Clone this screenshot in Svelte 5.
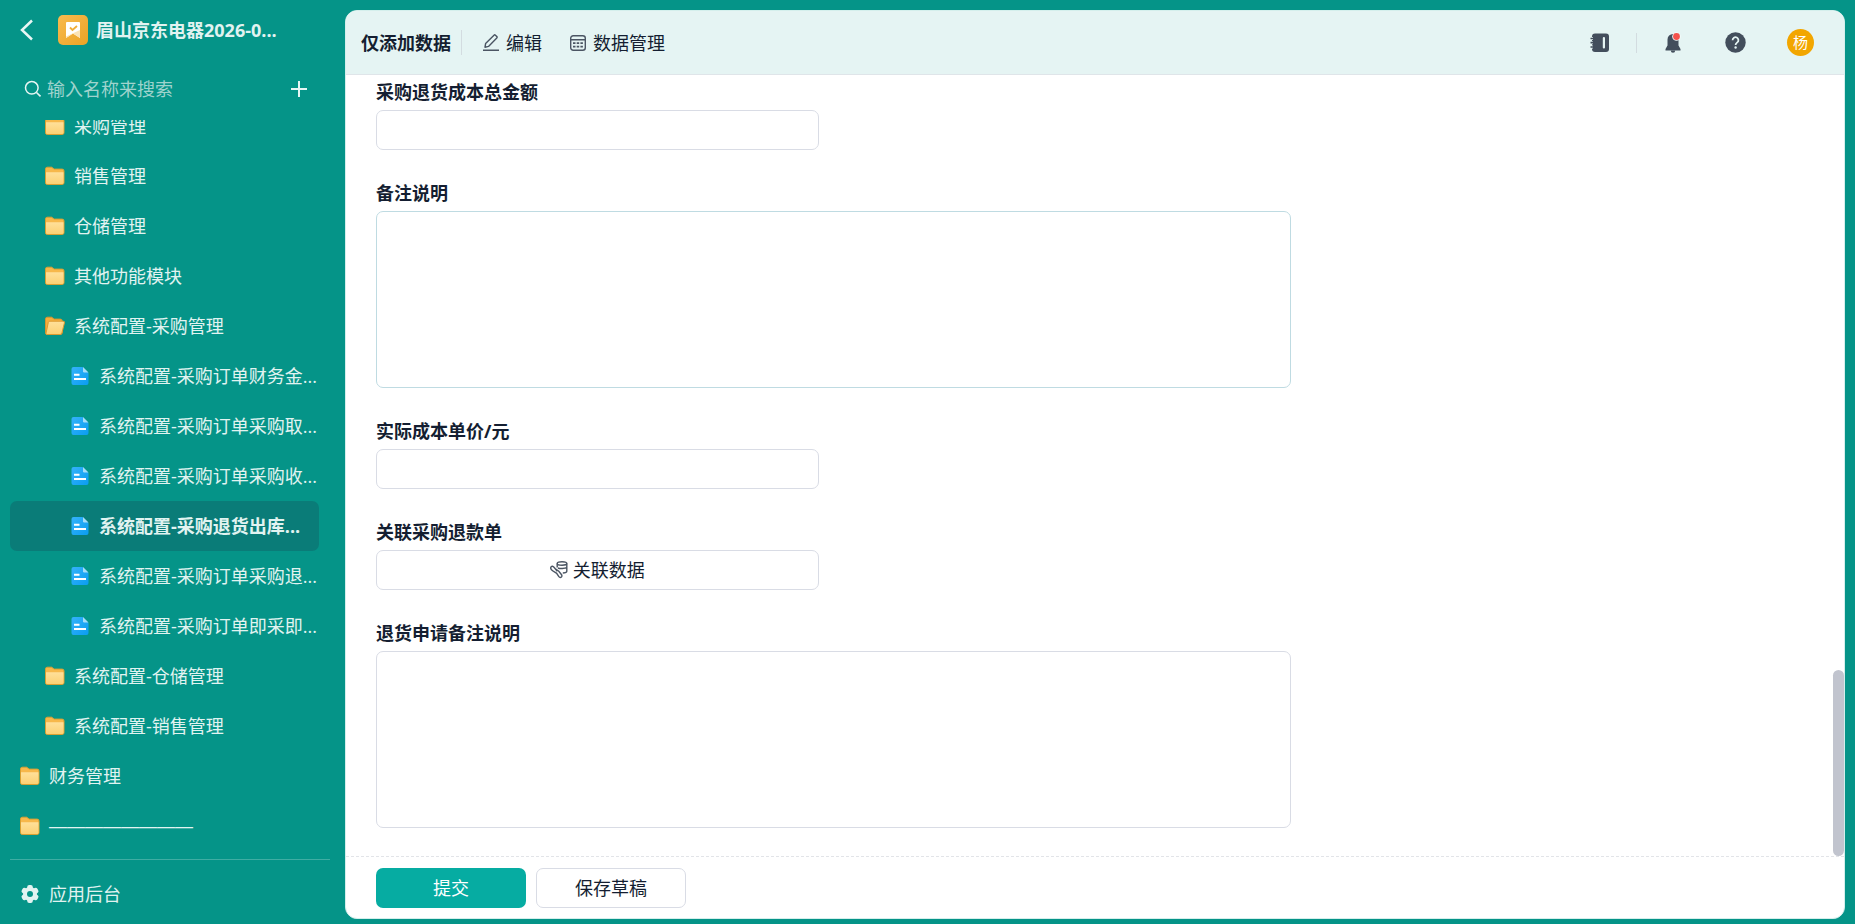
<script lang="ts">
	interface TreeNode {
		label: string;
		level: number;
		icon: 'folder' | 'open' | 'form';
		active?: boolean;
		separator?: boolean;
	}

	interface Field {
		id: string;
		label: string;
		type: 'text' | 'area' | 'link';
		hover?: boolean;
	}

	const nodes: TreeNode[] = [
		{ label: '采购管理', level: 1, icon: 'folder' },
		{ label: '销售管理', level: 1, icon: 'folder' },
		{ label: '仓储管理', level: 1, icon: 'folder' },
		{ label: '其他功能模块', level: 1, icon: 'folder' },
		{ label: '系统配置-采购管理', level: 1, icon: 'open' },
		{ label: '系统配置-采购订单财务金...', level: 2, icon: 'form' },
		{ label: '系统配置-采购订单采购取...', level: 2, icon: 'form' },
		{ label: '系统配置-采购订单采购收...', level: 2, icon: 'form' },
		{ label: '系统配置-采购退货出库...', level: 2, icon: 'form', active: true },
		{ label: '系统配置-采购订单采购退...', level: 2, icon: 'form' },
		{ label: '系统配置-采购订单即采即...', level: 2, icon: 'form' },
		{ label: '系统配置-仓储管理', level: 1, icon: 'folder' },
		{ label: '系统配置-销售管理', level: 1, icon: 'folder' },
		{ label: '财务管理', level: 0, icon: 'folder' },
		{ label: '————————', level: 0, icon: 'folder', separator: true }
	];

	const fields: Field[] = [
		{ id: 'cost-total', label: '采购退货成本总金额', type: 'text' },
		{ id: 'remark', label: '备注说明', type: 'area', hover: true },
		{ id: 'unit-price', label: '实际成本单价/元', type: 'text' },
		{ id: 'refund', label: '关联采购退款单', type: 'link' },
		{ id: 'apply-remark', label: '退货申请备注说明', type: 'area' }
	];

	let search = $state('');
	let values: Record<string, string> = $state({});
</script>

{#snippet folderIcon()}
	<svg width="20" height="20" viewBox="0 0 20 20">
		<path d="M0.5 3a1.8 1.8 0 0 1 1.8-1.8h4.4l2.4 1.9h8.1a1.8 1.8 0 0 1 1.8 1.8v11.8a1.8 1.8 0 0 1-1.8 1.8H2.3a1.8 1.8 0 0 1-1.8-1.8z" fill="#f7b84b" stroke="#d9a033" />
		<path d="M1 6.2h17.500v10.3a1.500 1.500 0 0 1-1.500 1.500H2.500A1.500 1.500 0 0 1 1 16.500z" fill="url(#folder-front)" />
	</svg>
{/snippet}

{#snippet openFolderIcon()}
	<svg width="20" height="20" viewBox="0 0 20 20">
		<path d="M0.5 3a1.8 1.8 0 0 1 1.8-1.8h4.4l2.4 1.9h6.300a1.8 1.8 0 0 1 1.8 1.8v11.8a1.8 1.8 0 0 1-1.8 1.8H2.3a1.8 1.8 0 0 1-1.8-1.8z" fill="#f5ae3d" stroke="#d9942c" />
		<path d="M4.800 5.200h13.200a1.400 1.400 0 0 1 1.400 1.800l-2.500 10a2 2 0 0 1-2 1.500H2a1 1 0 0 1-1-1.200L3.300 6.400a1.600 1.600 0 0 1 1.500-1.200z" fill="url(#folder-front)" stroke="#dc9a30" />
	</svg>
{/snippet}

{#snippet formIcon()}
	<svg width="20" height="20" viewBox="0 0 20 20">
		<path d="M3.500 1h9l6 6v10a2 2 0 0 1-2 2h-13a2 2 0 0 1-2-2V3a2 2 0 0 1 2-2z" fill="url(#form-page)" />
		<path d="M13 1l5.500 5.500h-4.300A1.200 1.200 0 0 1 13 5.300z" fill="#a5dcf8" />
		<path d="M4 8.700h5.500M4 13h12" stroke="#fff" stroke-width="2" />
	</svg>
{/snippet}

<div class="app">
	<svg class="defs" width="0" height="0" aria-hidden="true">
		<defs>
			<linearGradient id="folder-front" x1="0" y1="0" x2="0" y2="1">
				<stop offset="0" stop-color="#ffe09a" />
				<stop offset="1" stop-color="#fcd174" />
			</linearGradient>
			<linearGradient id="form-page" x1="0" y1="0" x2="1" y2="1">
				<stop offset="0" stop-color="#35b2fb" />
				<stop offset="1" stop-color="#0a9df0" />
			</linearGradient>
			<linearGradient id="app-logo" x1="0" y1="0" x2="1" y2="1">
				<stop offset="0" stop-color="#f8bb50" />
				<stop offset="1" stop-color="#eba324" />
			</linearGradient>
		</defs>
	</svg>

	<aside class="sidebar">
		<header class="app-header">
			<button class="icon-button" aria-label="返回">
				<svg width="14" height="22" viewBox="0 0 14 22">
					<path d="M12 1.500L2 11l10 9.500" fill="none" stroke="#e8f6f4" stroke-width="2.500" />
				</svg>
			</button>
			<svg width="30" height="30" viewBox="0 0 30 30">
				<rect width="30" height="30" rx="5" fill="url(#app-logo)" />
				<path d="M8 8a1 1 0 0 1 1-1h12a1 1 0 0 1 1 1v15l-7-4.500L8 23z" fill="#fff" />
				<path d="M22 15v8l-7-4.500L8 23v-1.500z" fill="#fbe3b5" />
				<path d="M12 12.500l2.500 2.500 4.500-4" fill="none" stroke="#f0ad38" stroke-width="1.800" />
			</svg>
			<h1>眉山京东电器2026-0...</h1>
		</header>

		<div class="search">
			<svg width="18" height="18" viewBox="0 0 18 18">
				<circle cx="7.800" cy="7.800" r="6.300" fill="none" stroke="#e8f6f4" stroke-width="1.500" />
				<path d="M12.500 12.500l4 3.800" stroke="#e8f6f4" stroke-width="1.700" />
			</svg>
			<input type="text" aria-label="搜索" placeholder="输入名称来搜索" bind:value={search} />
			<button class="icon-button" aria-label="新建">
				<svg width="16" height="16" viewBox="0 0 16 16">
					<path d="M8 0v16M0 8h16" stroke="#e8f6f4" stroke-width="2" />
				</svg>
			</button>
		</div>

		<nav class="tree">
			{#each nodes as node}
				<a href="#top" class="node level-{node.level}" class:active={node.active} class:separator={node.separator}>
					{#if node.icon === 'folder'}
						{@render folderIcon()}
					{:else if node.icon === 'open'}
						{@render openFolderIcon()}
					{:else}
						{@render formIcon()}
					{/if}
					<span>{node.label}</span>
				</a>
			{/each}
		</nav>

		<div class="backend">
			<a href="#backend" class="node">
				<svg width="20" height="20" viewBox="0 0 20 20">
					<g fill="#e1f3f1">
						<circle cx="10" cy="10" r="7" />
						<rect x="7.200" y="1" width="5.600" height="18" rx="2" />
						<rect x="7.200" y="1" width="5.600" height="18" rx="2" transform="rotate(60 10 10)" />
						<rect x="7.200" y="1" width="5.600" height="18" rx="2" transform="rotate(120 10 10)" />
					</g>
					<circle cx="10" cy="10" r="3" fill="#059488" />
				</svg>
				<span>应用后台</span>
			</a>
		</div>
	</aside>

	<main class="panel">
		<header class="toolbar">
			<h2>仅添加数据</h2>
			<span class="divider"></span>
			<button class="action">
				<svg width="16" height="18" viewBox="0 0 16 18" fill="none" stroke="#4b5563" stroke-width="1.400">
					<path d="M2 13.200l.6-3.600L11 1.200a1 1 0 0 1 1.400 0l1.400 1.400a1 1 0 0 1 0 1.400l-8.300 8.400z" stroke-linejoin="round" />
					<path d="M0 16.300h16" />
				</svg>
				编辑
			</button>
			<button class="action">
				<svg width="16" height="18" viewBox="0 0 16 18" fill="none" stroke="#4b5563" stroke-width="1.400">
					<rect x="0.700" y="1.700" width="14.600" height="14.600" rx="2.500" />
					<path d="M1 5.700h14" />
					<path d="M3 9.200h10M3 12.700h10" stroke-width="1.800" stroke-dasharray="2.500 1.200" />
				</svg>
				数据管理
			</button>

			<div class="tools">
				<button class="icon-button" aria-label="通讯录">
					<svg width="20" height="20" viewBox="0 0 20 20">
						<rect x="2" y="0.500" width="17" height="18.500" rx="3" fill="#434e5c" />
						<path d="M0 5.500h3M0 9.700h3M0 14h3" stroke="#e5f4f3" stroke-width="3" />
						<path d="M0.500 5.500h4M0.500 9.700h4M0.500 14h4" stroke="#434e5c" stroke-width="1.700" />
						<rect x="12.800" y="4" width="2.200" height="11.500" rx="1" fill="#e5f4f3" />
					</svg>
				</button>
				<span class="divider"></span>
				<button class="icon-button" aria-label="通知">
					<svg width="20" height="22" viewBox="0 0 20 22">
						<path d="M10 2a5.500 5.500 0 0 1 5.500 5.500v6L17.500 17v1.500h-15V17l2-3.500v-6A5.500 5.500 0 0 1 10 2z" fill="#434e5c" />
						<path d="M7.800 18.500h4.400a2.200 2.200 0 0 1-4.400 0z" fill="#434e5c" />
						<circle cx="13.500" cy="4.500" r="4.300" fill="#f4fbfa" />
						<circle cx="13.500" cy="4.500" r="3.400" fill="#f5524c" />
					</svg>
				</button>
				<button class="icon-button help" aria-label="帮助">
					<svg width="21" height="21" viewBox="0 0 21 21">
						<circle cx="10.500" cy="10.500" r="10.200" fill="#434e5c" />
						<path d="M7.600 8.200a2.900 2.900 0 1 1 4.700 2.200c-1 .8-1.700 1.200-1.700 2.500" fill="none" stroke="#e5f4f3" stroke-width="1.800" />
						<circle cx="10.600" cy="15.500" r="1.200" fill="#e5f4f3" />
					</svg>
				</button>
				<button class="avatar">杨</button>
			</div>
		</header>

		<div class="body">
			<form class="form" id="entry">
				{#each fields as field}
					<div class="field" class:wide={field.type === 'area'}>
						<label for={field.id}>{field.label}</label>
						{#if field.type === 'text'}
							<input class="control" id={field.id} type="text" bind:value={values[field.id]} />
						{:else if field.type === 'area'}
							<textarea class="control" class:hover={field.hover} id={field.id} bind:value={values[field.id]}></textarea>
						{:else}
							<button class="control link" id={field.id} type="button">
								<svg width="18" height="18" viewBox="0 0 18 18" fill="none" stroke="#4b5563" stroke-width="1.400">
									<ellipse cx="12" cy="2.500" rx="4.800" ry="1.800" />
									<path d="M7.200 2.500v4M16.800 2.500v7.700c0 1-1.600 1.700-4 1.800M8 7c2 .9 6.800.7 8.600-.5" />
									<path d="M7.300 10.200L4 6.300C3 5.100 1.900 5 1.200 5.800c-.7.800-.5 2 .3 2.900 1.400 1.500 3.200 2.300 5 3.400l2.200 3.300c.7 1 1.700 1.400 2.500.8.900-.6.900-1.800.2-2.700L8.800 10.300 5 7.500" />
								</svg>
								关联数据
							</button>
						{/if}
					</div>
				{/each}
			</form>
			<span class="scroll-thumb"></span>
		</div>

		<footer class="footer">
			<button class="submit" type="submit" form="entry">提交</button>
			<button class="draft" type="button">保存草稿</button>
		</footer>
	</main>
</div>

<style>
	:global(body) {
		background: #059488;
	}

	.app {
		display: flex;
		height: 100vh;
		box-sizing: border-box;
		padding: 10px 10px 5px 0;
		background: #059488;
		color: #141e31;
		font-family: "Open Sans", "Noto Sans CJK SC", sans-serif;
		font-size: 18px;
		line-height: 26px;
	}

	.app :global(*) {
		box-sizing: border-box;
	}

	.defs {
		position: absolute;
	}

	svg {
		display: block;
		flex: none;
	}

	button,
	input,
	textarea {
		margin: 0;
		padding: 0;
		border: 0;
		background: none;
		color: inherit;
		font: inherit;
	}

	button {
		cursor: pointer;
	}

	h1,
	h2 {
		margin: 0;
		font-size: 18px;
		font-weight: 700;
		white-space: nowrap;
	}

	.icon-button {
		display: flex;
		align-items: center;
	}

	/* sidebar */
	.sidebar {
		flex: none;
		display: flex;
		flex-direction: column;
		width: 345px;
		color: #e1f3f1;
	}

	.app-header {
		display: flex;
		align-items: center;
		height: 40px;
		padding-left: 20px;
	}

	.app-header > svg {
		margin: 0 8px 0 24px;
	}

	.search {
		display: flex;
		align-items: center;
		gap: 5px;
		height: 60px;
		margin: 10px 38px 0 24px;
		padding-bottom: 2px;
	}

	.search input {
		flex: 1;
		min-width: 0;
		outline: none;
	}

	.search input::placeholder {
		color: #9fd3cd;
		opacity: 1;
	}

	/* the list rests at its last entry */
	.tree {
		flex: 1;
		min-height: 0;
		display: flex;
		flex-direction: column;
		justify-content: flex-end;
		overflow: hidden;
		padding: 0 26px 8px 10px;
	}

	.node {
		flex: none;
		display: flex;
		align-items: center;
		gap: 9px;
		height: 50px;
		padding-left: 10px;
		border-radius: 7px;
		color: #e1f3f1;
		text-decoration: none;
		white-space: nowrap;
	}

	.level-1 {
		padding-left: 35px;
	}

	.level-2 {
		padding-left: 60px;
	}

	.active {
		background: #0a7c78;
		font-weight: 700;
	}

	.separator {
		font-family: "Liberation Sans", sans-serif;
	}

	.backend {
		margin: 0 15px 0 10px;
		padding-top: 9px;
		border-top: 1px solid #3fada3;
	}

	/* main panel */
	.panel {
		flex: 1;
		min-width: 0;
		display: flex;
		flex-direction: column;
		overflow: hidden;
		border: 1px solid #d4efec;
		border-radius: 12px;
		background: #fff;
	}

	.toolbar {
		flex: none;
		display: flex;
		align-items: center;
		height: 64px;
		padding: 0 30px 0 15px;
		border-bottom: 1px solid #dfe5e9;
		background: #e5f4f3;
	}

	.divider {
		width: 1px;
		height: 25px;
		margin: 0 21px 0 10px;
		background: #d3dce0;
	}

	.action {
		display: flex;
		align-items: center;
		gap: 7px;
		margin-right: 28px;
	}

	.tools {
		display: flex;
		align-items: center;
		margin-left: auto;
	}

	.tools .divider {
		height: 20px;
		margin: 0 26px;
	}

	.help {
		margin: 0 41px 0 42px;
	}

	.avatar {
		width: 27px;
		height: 27px;
		border-radius: 50%;
		background: #f2a600;
		color: #fff;
		font-size: 15px;
		line-height: 27px;
	}

	.body {
		position: relative;
		flex: 1;
		min-height: 0;
		display: flex;
		flex-direction: column;
		justify-content: flex-end;
		overflow: hidden;
		padding: 0 30px 28px;
	}

	.form {
		display: grid;
		grid-template-columns: 1fr 1fr;
		gap: 30px;
		max-width: 915px;
	}

	.field {
		grid-column: 1;
		display: flex;
		flex-direction: column;
		gap: 5px;
	}

	.wide {
		grid-column: 1 / 3;
	}

	label {
		font-weight: 700;
	}

	.control {
		width: 100%;
		height: 40px;
		padding: 6px 12px;
		border: 1px solid #d9dce5;
		border-radius: 7px;
		background: #fff;
		outline: none;
	}

	textarea.control {
		display: block;
		height: 177px;
		resize: none;
	}

	.hover {
		border-color: #bfdbe2;
	}

	.link {
		display: flex;
		align-items: center;
		justify-content: center;
		gap: 5px;
	}

	.scroll-thumb {
		position: absolute;
		right: 0;
		bottom: 0;
		width: 11px;
		height: 186px;
		border-radius: 6px;
		background: #c1c4ce;
	}

	.footer {
		flex: none;
		display: flex;
		gap: 10px;
		padding: 11px 30px 10px;
		border-top: 1px dashed #e2e4e8;
	}

	.footer button {
		width: 150px;
		height: 40px;
		border-radius: 7px;
	}

	.submit {
		background: #06aca2;
		color: #fff;
	}

	.footer .draft {
		border: 1px solid #d9dce5;
	}
</style>
